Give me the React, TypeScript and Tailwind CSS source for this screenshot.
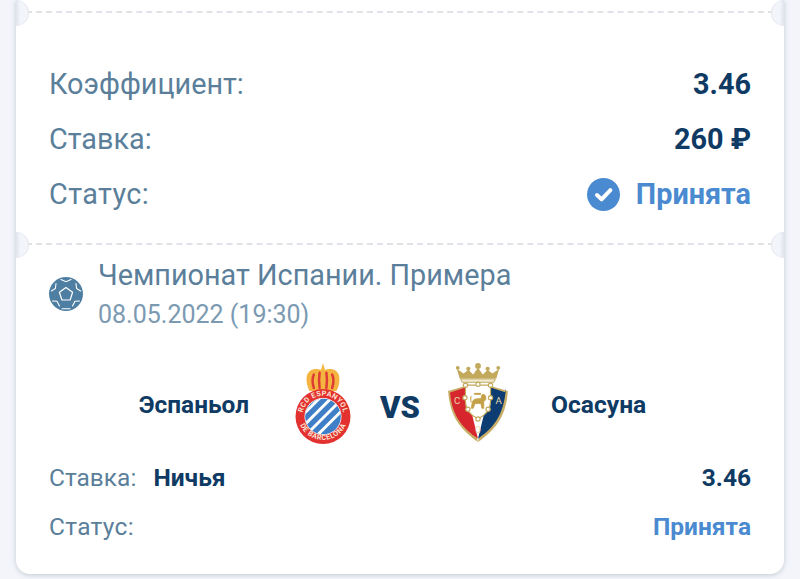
import React from 'react';

function Notch({ side }: { side: 'left' | 'right' }) {
  return (
    <div
      className={`absolute top-[-13px] w-[13px] h-[26px] bg-[#f3f5fa] ${
        side === 'left'
          ? 'left-0 rounded-r-full shadow-[inset_2px_0_3px_rgba(90,110,130,0.12)] border-r border-[#e4e7ec]'
          : 'right-0 rounded-l-full shadow-[inset_-2px_0_3px_rgba(90,110,130,0.12)] border-l border-[#e4e7ec]'
      }`}
    />
  );
}

function SummaryRow({ label, labelClass, children }: { label: string; labelClass?: string; children: React.ReactNode }) {
  return (
    <div className="flex items-center justify-between h-[55px]">
      <span className={`text-[28.8px] text-[#5b7f9b] ${labelClass ?? ''}`}>{label}</span>
      {children}
    </div>
  );
}

function CheckBadge() {
  return (
    <svg width="33" height="33" viewBox="0 0 33 33" className="-ml-px">
      <circle cx="16.5" cy="16.5" r="16.5" fill="#4a8ad0" />
      <path d="M10 17l4.6 4.4L23.4 12.2" fill="none" stroke="#fff" strokeWidth="4" strokeLinecap="round" strokeLinejoin="round" />
    </svg>
  );
}

function Ball() {
  return (
    <svg width="34" height="34" viewBox="0 0 34 34" className="mb-[2px]">
      <circle cx="17" cy="17" r="17" fill="#4f7ea3" />
      <path d="M17 10.5l6.6 4.8-2.5 7.7h-8.2l-2.5-7.7z" fill="none" stroke="#fff" strokeWidth="1.2" strokeLinejoin="round" />
      <g fill="none" stroke="#fff" strokeWidth="1.1" strokeLinecap="round">
        <path d="M12 2.5l5 2.2 5-2.2" />
        <path d="M27 6.5l.6 5 4 2.5" />
        <path d="M7 6.5l-.6 5-4 2.5" />
        <path d="M3.5 24l4.5.2 2.5 4.8" />
        <path d="M30.5 24l-4.5.2-2.5 4.8" />
        <path d="M13 31.8h8" />
      </g>
    </svg>
  );
}

function EspanyolCrest() {
  return (
    <svg width="58" height="81" viewBox="0 0 60 84">
      <defs>
        <path id="topArc" d="M8.500 55.500a21.500 21.500 0 0 1 43 0" />
        <path id="botArc" d="M4.500 58a25.800 25.800 0 0 0 51 0" />
        <clipPath id="blueDisc">
          <circle cx="30" cy="55.500" r="18.500" />
        </clipPath>
      </defs>
      {/* crown */}
      <path d="M30 0l2 7c7-2 14 0 15 8 .5 5-1 10-3 14H16C14 25 12.500 20 13 15c1-8 8-10 15-8z" fill="#f5b440" />
      <path d="M20.500 12c-2 4-1.500 9 0 14M26.500 10c-.8 5-.8 11 0 16M33.500 10c.8 5 .8 11 0 16M39.500 12c2 4 1.500 9 0 14" fill="none" stroke="#dd3b33" strokeWidth="2.600" strokeLinecap="round" />
      <circle cx="30" cy="55.500" r="28.500" fill="#e2312f" />
      <circle cx="30" cy="55.500" r="19.200" fill="#fff" />
      <g clipPath="url(#blueDisc)">
        <rect x="10" y="36" width="40" height="40" fill="#3e7fc7" />
        <g stroke="#fff" strokeWidth="3">
          <path d="M6 57L32 31" />
          <path d="M11 64L39 36" />
          <path d="M17 70L45 42" />
          <path d="M25 74L51 48" />
        </g>
      </g>
      <text fontFamily="Roboto, sans-serif" fontSize="7.500" fontWeight="700" fill="#fbe6d4" letterSpacing="0.500">
        <textPath href="#topArc" startOffset="50%" textAnchor="middle">RCD ESPANYOL</textPath>
      </text>
      <text fontFamily="Roboto, sans-serif" fontSize="7.500" fontWeight="700" fill="#fbe6d4" letterSpacing="0.500">
        <textPath href="#botArc" startOffset="50%" textAnchor="middle">DE BARCELONA</textPath>
      </text>
    </svg>
  );
}

function OsasunaCrest() {
  return (
    <svg width="60" height="81" viewBox="0 0 62 84">
      {/* crown */}
      <g fill="#c2a95c">
        <circle cx="31" cy="3" r="3" />
        <circle cx="21" cy="6" r="2.200" />
        <circle cx="41" cy="6" r="2.200" />
        <circle cx="10" cy="5" r="2" />
        <circle cx="52" cy="5" r="2" />
        <path d="M9 6l7 5 5-4 5 5 5-7 5 7 5-5 5 4 7-5-3 10H12z" />
      </g>
      <path d="M13 16.500h36l-1.500 3.500h-33z" fill="#f0ead2" stroke="#c2a95c" strokeWidth="1" />
      {/* shield */}
      <path d="M0 29l17-5 14 58C15 70 2 58 0 29z" fill="#c9ad66" />
      <path d="M62 29l-17-5-14 58c16-12 29-24 31-53z" fill="#c9ad66" />
      <path d="M2 30.500l16-5 13 53C16 68 4 56 2 30.500z" fill="#d8262f" />
      <path d="M60 30.500l-16-5-13 53c15-10.500 27-22.500 29-53z" fill="#0d3c72" />
      <path d="M18 23H44V40C44 50 37 55 31 58C25 55 18 50 18 40Z" fill="#fff" stroke="#c2a95c" strokeWidth="1.200" />
      <g fill="#fff" stroke="#c2a95c" strokeWidth="1.200">
        <circle cx="18" cy="23" r="2.200" />
        <circle cx="31" cy="22" r="2.200" />
        <circle cx="44" cy="23" r="2.200" />
        <circle cx="17.500" cy="36" r="2.200" />
        <circle cx="44" cy="36" r="2.200" />
        <circle cx="20.500" cy="48" r="2.200" />
        <circle cx="41.500" cy="48" r="2.200" />
        <circle cx="31" cy="58" r="2.200" />
      </g>
      {/* lion */}
      <path d="M24 47l1-6c.5-3 3-4 6-4h3l1-4c2-1 4 0 4 2v3l-2 2v7h-2l-1-5h-6l-2 5zM24 41c-1-3-1-5 0-7" fill="#c4a048" stroke="#c4a048" strokeWidth="0.800" />
      <path d="M27 31h7v2h-7z" fill="#c4a048" />
      <text x="9.500" y="42" fontFamily="Roboto, sans-serif" fontSize="10" fill="#e6d9a8" textAnchor="middle">C</text>
      <text x="52.500" y="42" fontFamily="Roboto, sans-serif" fontSize="10" fill="#e6d9a8" textAnchor="middle">A</text>
      <text x="31" y="73" fontFamily="Roboto, sans-serif" fontSize="9" fill="#e6d9a8" textAnchor="middle">O</text>
    </svg>
  );
}

export default function App() {
  return (
    <div className="w-[800px] h-[579px] overflow-hidden bg-[#f3f5fa] px-4 font-['Roboto',sans-serif]">
      <div className="relative h-[574px] bg-white rounded-b-[14px] shadow-[0_1px_5px_rgba(70,90,110,0.28)] flex flex-col">
        <div className="h-[11px]" />

        <div className="relative h-[232px] border-t-2 border-dashed border-[#dfe3e8] pt-[44px] px-[33px]">
          <Notch side="left" />
          <Notch side="right" />
          <SummaryRow label="Коэффициент:">
            <span className="text-[28.8px] font-bold text-[#0e3a63]">3.46</span>
          </SummaryRow>
          <SummaryRow label="Ставка:">
            <span className="text-[28.8px] font-bold text-[#0e3a63]">260 ₽</span>
          </SummaryRow>
          <SummaryRow label="Статус:" labelClass="tracking-[0.4px]">
            <span className="flex items-center gap-4">
              <CheckBadge />
              <span className="text-[28.8px] font-bold text-[#4a8ad0]">Принята</span>
            </span>
          </SummaryRow>
        </div>

        <div className="relative flex-1 border-t-2 border-dashed border-[#dfe3e8] px-[33px] pt-[10px]">
          <Notch side="left" />
          <Notch side="right" />
          <div className="flex items-center gap-[15px]">
            <Ball />
            <div>
              <div className="text-[28.8px] leading-[40px] text-[#5b7f9b]">Чемпионат Испании. Примера</div>
              <div className="text-[25px] leading-[40px] text-[#7b9ab2]">08.05.2022 (19:30)</div>
            </div>
          </div>

          <div className="flex items-center h-[84px] mt-[28px]">
            <div className="w-[200px] text-right text-[24.4px] font-bold text-[#0e3a63] whitespace-nowrap">Эспаньол</div>
            <div className="ml-[45px] flex mb-[3px]"><EspanyolCrest /></div>
            <div className="w-[96px] pt-[6px] text-center text-[31px] font-black text-[#0e3a63]">VS</div>
            <div className="flex mb-[3px]"><OsasunaCrest /></div>
            <div className="ml-[43px] text-[24.6px] font-bold text-[#0e3a63] whitespace-nowrap">Осасуна</div>
          </div>

          <div className="flex items-center justify-between h-[49px] mt-[7px]">
            <div className="flex items-center gap-[17px] text-[24.5px]">
              <span className="text-[#5b7f9b]">Ставка:</span>
              <span className="font-bold text-[#0e3a63]">Ничья</span>
            </div>
            <span className="text-[24.5px] font-bold text-[#0e3a63]">3.46</span>
          </div>
          <div className="flex items-center justify-between h-[49px]">
            <span className="text-[24.5px] tracking-[0.3px] text-[#5b7f9b]">Статус:</span>
            <span className="text-[24.5px] font-bold text-[#4a8ad0]">Принята</span>
          </div>
        </div>
      </div>
    </div>
  );
}
